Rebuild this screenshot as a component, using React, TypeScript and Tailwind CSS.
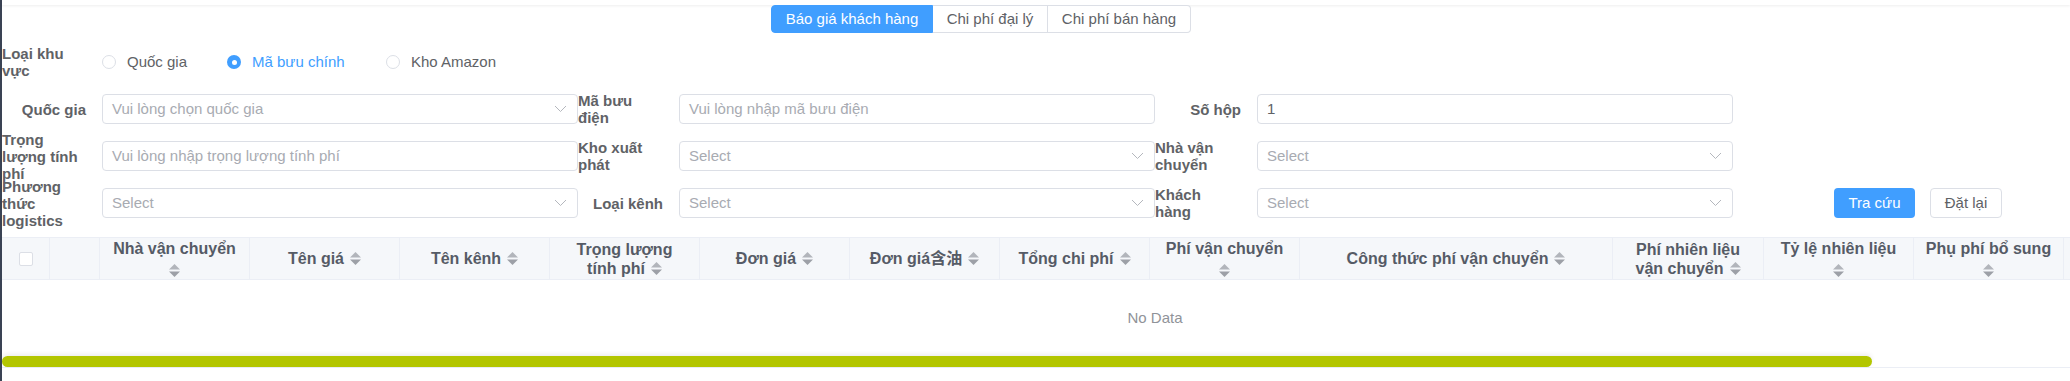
import type { ReactNode } from "react";

const FONT = "font-['Liberation_Sans','Noto_Sans_CJK_SC',Arial,sans-serif]";

function Chevron() {
  return (
    <svg width="13" height="8" viewBox="0 0 13 8" fill="none">
      <path d="M1 1l5.5 5.5L12 1" stroke="#b4b7bd" strokeWidth="1" />
    </svg>
  );
}

function SortIcon() {
  return (
    <svg width="11" height="15" viewBox="0 0 11 15" className="inline-block shrink-0">
      <path d="M0 6.5L5.5 1 11 6.5z" fill="#b2b5bb" />
      <path d="M0 8.5L5.5 14 11 8.5z" fill="#9da0a7" />
    </svg>
  );
}

function Label({ children, multi, width }: { children: ReactNode; multi?: boolean; width: string }) {
  return (
    <div
      className={`${width} h-[30px] shrink-0 flex items-center pr-4 font-bold text-[15px] leading-[17px] text-[#606266] ${
        multi ? "justify-start" : "justify-end"
      }`}
    >
      <div>{children}</div>
    </div>
  );
}

function Field({ text, select, value }: { text: string; select?: boolean; value?: boolean }) {
  return (
    <div className="w-[476px] h-[30px] shrink-0 border border-[#dcdfe6] rounded-[4px] flex items-center justify-between pl-[9px] pr-[10px] bg-white">
      <span className={`text-[15px] ${value ? "text-[#606266]" : "text-[#a8abb2]"}`}>{text}</span>
      {select && <Chevron />}
    </div>
  );
}

function Radio({ label, checked, width }: { label: string; checked?: boolean; width: string }) {
  return (
    <div className={`${width} flex items-center`}>
      {checked ? (
        <span className="w-[14px] h-[14px] rounded-full bg-[#409eff] flex items-center justify-center">
          <span className="w-[5px] h-[5px] rounded-full bg-white" />
        </span>
      ) : (
        <span className="w-[14px] h-[14px] rounded-full border border-[#dcdfe6] bg-white" />
      )}
      <span className={`ml-[11px] text-[15px] ${checked ? "text-[#409eff]" : "text-[#606266]"}`}>{label}</span>
    </div>
  );
}

type Col = { w: string; title?: ReactNode };

const stacked = (text: string) => (
  <div className="flex flex-col items-center">
    <span>{text}</span>
    <span className="mt-[2px]">
      <SortIcon />
    </span>
  </div>
);

const inline = (text: string) => (
  <span className="flex items-center gap-[6px]">
    {text}
    <SortIcon />
  </span>
);

const twoLine = (a: string, b: string) => (
  <div className="flex flex-col items-center">
    <span>{a}</span>
    <span className="flex items-center gap-[6px]">
      {b}
      <SortIcon />
    </span>
  </div>
);

const cols: Col[] = [
  { w: "w-[48px]" },
  { w: "w-[50px]" },
  { w: "w-[150px]", title: stacked("Nhà vận chuyển") },
  { w: "w-[150px]", title: inline("Tên giá") },
  { w: "w-[150px]", title: inline("Tên kênh") },
  { w: "w-[150px]", title: twoLine("Trọng lượng", "tính phí") },
  { w: "w-[150px]", title: inline("Đơn giá") },
  { w: "w-[150px]", title: inline("Đơn giá含油") },
  { w: "w-[150px]", title: inline("Tổng chi phí") },
  { w: "w-[150px]", title: stacked("Phí vận chuyển") },
  { w: "w-[313px]", title: inline("Công thức phí vận chuyển") },
  { w: "w-[151px]", title: twoLine("Phí nhiên liệu", "vận chuyển") },
  { w: "w-[150px]", title: stacked("Tỷ lệ nhiên liệu") },
  { w: "w-[150px]", title: stacked("Phụ phí bổ sung") },
  { w: "w-[150px]" },
];

export default function App() {
  return (
    <div className={`w-[2070px] h-[381px] overflow-hidden bg-white flex ${FONT}`}>
      <div className="w-[2px] h-full shrink-0 bg-[#3a4354]" />

      <div className="flex-1 min-w-0 flex flex-col">
        <div className="h-[5px] shrink-0 shadow-[0_1px_3px_rgba(0,0,0,0.07)]" />

        {/* tabs */}
        <div className="flex ml-[769px] h-[28px] text-[15px]">
          <button className="w-[162px] bg-[#409eff] text-white rounded-l-[4px] border border-[#409eff]">Báo giá khách hàng</button>
          <button className="w-[115px] bg-white text-[#606266] border-y border-r border-[#dcdfe6]">Chi phí đại lý</button>
          <button className="w-[143px] bg-white text-[#606266] border-y border-r border-[#dcdfe6] rounded-r-[4px]">
            Chi phí bán hàng
          </button>
        </div>

        {/* filter form */}
        <div className="mt-[14px] flex flex-col gap-[17px]">
          <div className="flex items-center">
            <Label width="w-[100px]" multi>
              Loại khu
              <br />
              vực
            </Label>
            <Radio width="w-[125px]" label="Quốc gia" />
            <Radio width="w-[159px]" label="Mã bưu chính" checked />
            <Radio width="w-[160px]" label="Kho Amazon" />
          </div>

          <div className="flex items-center">
            <Label width="w-[100px]">Quốc gia</Label>
            <Field text="Vui lòng chọn quốc gia" select />
            <Label width="w-[101px]" multi>
              Mã bưu
              <br />
              điện
            </Label>
            <Field text="Vui lòng nhập mã bưu điện" />
            <Label width="w-[102px]">Số hộp</Label>
            <Field text="1" value />
          </div>

          <div className="flex items-center">
            <Label width="w-[100px]" multi>
              Trọng
              <br />
              lượng tính
              <br />
              phí
            </Label>
            <Field text="Vui lòng nhập trọng lượng tính phí" />
            <Label width="w-[101px]" multi>
              Kho xuất
              <br />
              phát
            </Label>
            <Field text="Select" select />
            <Label width="w-[102px]" multi>
              Nhà vận
              <br />
              chuyển
            </Label>
            <Field text="Select" select />
          </div>

          <div className="flex items-center">
            <Label width="w-[100px]" multi>
              Phương
              <br />
              thức
              <br />
              logistics
            </Label>
            <Field text="Select" select />
            <Label width="w-[101px]">Loại kênh</Label>
            <Field text="Select" select />
            <Label width="w-[102px]" multi>
              Khách
              <br />
              hàng
            </Label>
            <Field text="Select" select />
            <button className="ml-[101px] w-[81px] h-[30px] rounded-[4px] bg-[#409eff] text-white text-[15px]">Tra cứu</button>
            <button className="ml-[15px] w-[72px] h-[30px] rounded-[4px] bg-white border border-[#dcdfe6] text-[#606266] text-[15px]">
              Đặt lại
            </button>
          </div>
        </div>

        {/* table */}
        <div className="mt-[19px] overflow-hidden">
          <div className="flex w-max h-[43px] bg-[#f5f7fa] border-y border-[#ebeef5] text-[16px] font-bold leading-[19px] text-[#555b66]">
            {cols.map((c, i) => (
              <div key={i} className={`${c.w} shrink-0 h-full border-r border-[#ebeef5] flex items-center justify-center text-center`}>
                {i === 0 ? <span className="w-[14px] h-[14px] rounded-[2px] border border-[#dcdfe6] bg-white" /> : c.title}
              </div>
            ))}
          </div>
          <div className="w-[2306px] h-[76px] flex items-center justify-center text-[15px] text-[#909399]">No Data</div>
          <div className="h-[12px] border-b border-[#ebeef5]">
            <div className="w-[1870px] h-[11px] rounded-full bg-[#b3c600] shadow-[0_-2px_4px_rgba(0,0,0,0.07)]" />
          </div>
        </div>
      </div>
    </div>
  );
}
